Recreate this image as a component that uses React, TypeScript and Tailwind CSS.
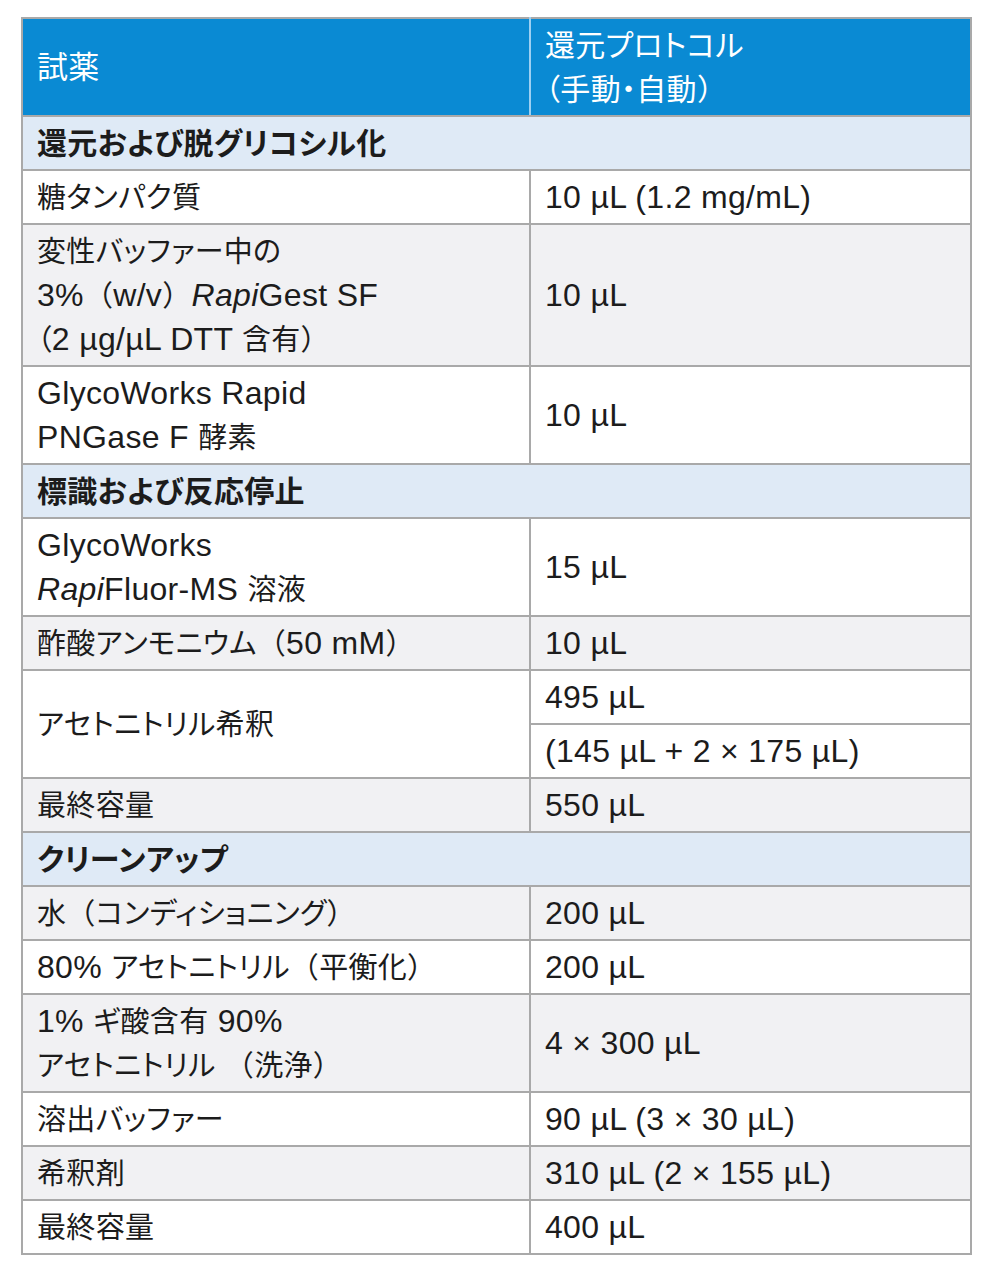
import React from 'react';

// Latin text is set at the base size; CJK runs are wrapped in a smaller, proportional span
const CJK = /([\u3000-\u30ff\u4e00-\u9fff\uff00-\uffef]+)/;

function renderLine(line: string, cjkClass: string, lineKey: number) {
    const out: React.ReactNode[] = [];
    let pos = 0;
    line.split('*').forEach((chunk, ci) => {
        const italic = ci % 2 === 1;
        chunk.split(CJK).forEach((part, pi) => {
            if (!part) return;
            const key = `${lineKey}-${ci}-${pi}`;
            let node: React.ReactNode;
            if (pi % 2 === 1) {
                const bits = part.split(/([（）])/).filter(Boolean);
                let local = pos;
                node = (
                    <span key={key} className={`${cjkClass} leading-none [font-feature-settings:'palt']`}>
                        {bits.map((b, bi) => {
                            const atStart = local === 0;
                            local += b.length;
                            if ((b === '（' || b === '）') && !atStart) {
                                return (
                                    <span key={bi} className="[font-feature-settings:normal]">
                                        {b}
                                    </span>
                                );
                            }
                            return <React.Fragment key={bi}>{b}</React.Fragment>;
                        })}
                    </span>
                );
            } else {
                node = <React.Fragment key={key}>{part}</React.Fragment>;
            }
            out.push(italic ? <i key={`i${key}`}>{node}</i> : node);
            pos += part.length;
        });
    });
    return out;
}

function Txt({ t, cjk = 'text-[29px]' }: { t: string; cjk?: string }) {
    return (
        <>
            {t.split('\n').map((line, li) => (
                <React.Fragment key={li}>
                    {li > 0 && <br />}
                    {renderLine(line, cjk, li)}
                </React.Fragment>
            ))}
        </>
    );
}

type Row =
    | { kind: 'section'; label: string }
    | { kind: 'row'; left: string; right: string; shade: boolean };

const rows: Row[] = [
    { kind: 'section', label: '還元および脱グリコシル化' },
    { kind: 'row', left: '糖タンパク質', right: '10 µL (1.2 mg/mL)', shade: false },
    {
        kind: 'row',
        left: '変性バッファー中の\n3%（w/v）*Rapi*Gest SF\n（2 µg/µL DTT 含有）',
        right: '10 µL',
        shade: true,
    },
    { kind: 'row', left: 'GlycoWorks Rapid\nPNGase F 酵素', right: '10 µL', shade: false },
    { kind: 'section', label: '標識および反応停止' },
    { kind: 'row', left: 'GlycoWorks\n*Rapi*Fluor-MS 溶液', right: '15 µL', shade: false },
    { kind: 'row', left: '酢酸アンモニウム（50 mM）', right: '10 µL', shade: true },
];

const cleanup: Row[] = [
    { kind: 'section', label: 'クリーンアップ' },
    { kind: 'row', left: '水（コンディショニング）', right: '200 µL', shade: true },
    { kind: 'row', left: '80% アセトニトリル（平衡化）', right: '200 µL', shade: false },
    { kind: 'row', left: '1% ギ酸含有 90%\nアセトニトリル （洗浄）', right: '4 × 300 µL', shade: true },
    { kind: 'row', left: '溶出バッファー', right: '90 µL (3 × 30 µL)', shade: false },
    { kind: 'row', left: '希釈剤', right: '310 µL (2 × 155 µL)', shade: true },
    { kind: 'row', left: '最終容量', right: '400 µL', shade: false },
];

const cell = 'border-2 border-[#a9a9a9] px-[14px] py-1 align-middle leading-[44px] whitespace-nowrap';

function renderRow(r: Row, i: number) {
    if (r.kind === 'section') {
        return (
            <tr key={i} className="bg-[#dfeaf6]">
                <td colSpan={2} className={`${cell} font-bold`}>
                    <Txt t={r.label} cjk="text-[30px]" />
                </td>
            </tr>
        );
    }
    const bg = r.shade ? 'bg-[#f1f1f3]' : 'bg-white';
    return (
        <tr key={i} className={bg}>
            <td className={cell}>
                <Txt t={r.left} />
            </td>
            <td className={cell}>
                <Txt t={r.right} />
            </td>
        </tr>
    );
}

export default function App() {
    return (
        <div
            className="min-h-screen bg-white pt-[17px] pl-[21px] text-[#1c1c1c]"
            style={{ fontFamily: '"Liberation Sans", "Noto Sans CJK JP", sans-serif' }}
        >
            <table className="w-[951px] table-fixed border-collapse text-[32px] tracking-[0.01em]">
                <colgroup>
                    <col className="w-[508px]" />
                    <col />
                </colgroup>
                <thead>
                    <tr className="bg-[#0a8ad3] text-white">
                        <th className="border-2 border-[#a9a9a9] border-r-[#9dd0f2] px-[14px] py-1 text-left font-normal leading-[44px]">
                            <Txt t="試薬" cjk="text-[31px]" />
                        </th>
                        <th className="border-2 border-[#a9a9a9] px-[14px] py-1 text-left font-normal leading-[44px]">
                            <Txt t={'還元プロトコル\n（手動・自動）'} cjk="text-[30px]" />
                        </th>
                    </tr>
                </thead>
                <tbody>
                    {rows.map(renderRow)}
                    <tr className="bg-white">
                        <td rowSpan={2} className={cell}>
                            <Txt t="アセトニトリル希釈" />
                        </td>
                        <td className={cell}>495 µL</td>
                    </tr>
                    <tr className="bg-white">
                        <td className={cell}>(145 µL + 2 × 175 µL)</td>
                    </tr>
                    <tr className="bg-[#f1f1f3]">
                        <td className={cell}>
                            <Txt t="最終容量" />
                        </td>
                        <td className={cell}>550 µL</td>
                    </tr>
                    {cleanup.map((r, i) => renderRow(r, i + 100))}
                </tbody>
            </table>
        </div>
    );
}
